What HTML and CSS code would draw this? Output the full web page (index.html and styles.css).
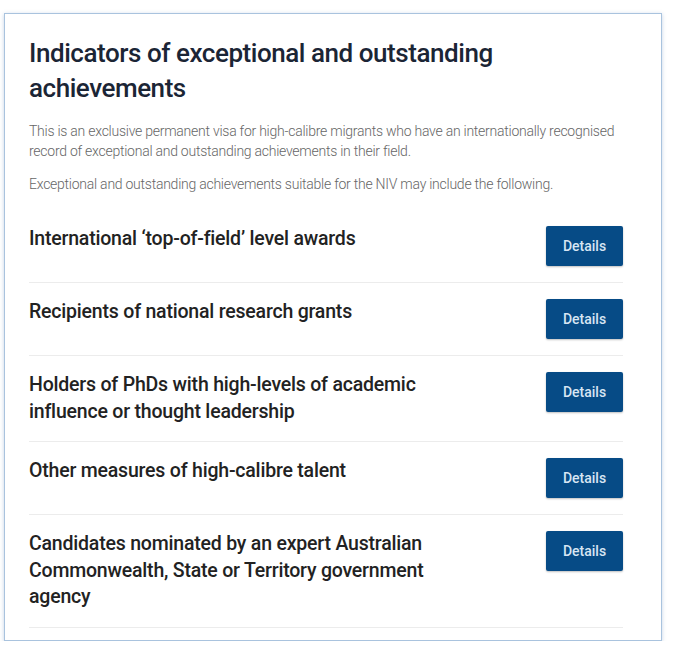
FILE: index.html
```html
<!DOCTYPE html>
<html lang="en">
<head>
<meta charset="utf-8">
<title>Indicators of exceptional and outstanding achievements</title>
<link rel="stylesheet" href="styles.css">
</head>
<body>
<section class="card">
  <h1 class="title">Indicators of exceptional and outstanding achievements</h1>
  <p class="intro">This is an exclusive permanent visa for high-calibre migrants who have an internationally recognised record of exceptional and outstanding achievements in their field.</p>
  <p class="intro">Exceptional and outstanding achievements suitable for the NIV may include the following.</p>
  <ul class="list">
    <li class="row"><span class="row-text">International ‘top-of-field’ level awards</span><a class="btn" href="#">Details</a></li>
    <li class="row"><span class="row-text">Recipients of national research grants</span><a class="btn" href="#">Details</a></li>
    <li class="row"><span class="row-text">Holders of PhDs with high-levels of academic influence or thought leadership</span><a class="btn" href="#">Details</a></li>
    <li class="row"><span class="row-text">Other measures of high-calibre talent</span><a class="btn" href="#">Details</a></li>
    <li class="row"><span class="row-text">Candidates nominated by an expert Australian Commonwealth, State or Territory government agency</span><a class="btn" href="#">Details</a></li>
  </ul>
</section>
</body>
</html>
```
FILE: styles.css
```css
* { box-sizing: border-box; }
html, body { margin: 0; background: #ffffff; }
body {
  padding: 13px 0 0 4px;
  font-family: Roboto, "Liberation Sans", Arial, sans-serif;
}
.card {
  width: 658px;
  height: 628px;
  border: 1px solid #a9c3de;
  box-shadow: 0 1px 4px rgba(90, 130, 180, 0.35);
  background: #fff;
  padding: 22px 38px 0 24px;
}
.title {
  margin: 0 0 15px;
  font-size: 26px;
  line-height: 35px;
  font-weight: 500;
  color: #1b2535;
  letter-spacing: -0.45px;
}
.intro {
  margin: 0 0 13px;
  font-size: 14px;
  line-height: 20px;
  font-weight: 300;
  color: #666;
  letter-spacing: -0.25px;
}
.list {
  list-style: none;
  margin: 0;
  padding: 19px 0 0;
}
.row {
  display: flex;
  justify-content: space-between;
  align-items: flex-start;
  padding: 16px 0 16px;
  border-bottom: 1px solid #ececec;
}
.row:first-child { padding-top: 0; }
.row-text {
  max-width: 430px;
  font-size: 19.5px;
  line-height: 26.5px;
  font-weight: 500;
  color: #222;
  letter-spacing: -0.2px;
}
.btn {
  flex: none;
  width: 77px;
  height: 40px;
  display: flex;
  align-items: center;
  justify-content: center;
  background: #064b86;
  color: #d7e5f3;
  font-size: 14px;
  font-weight: 500;
  text-decoration: none;
  border-radius: 2px;
  box-shadow: 0 1px 2px rgba(0, 0, 0, 0.25);
}
```
